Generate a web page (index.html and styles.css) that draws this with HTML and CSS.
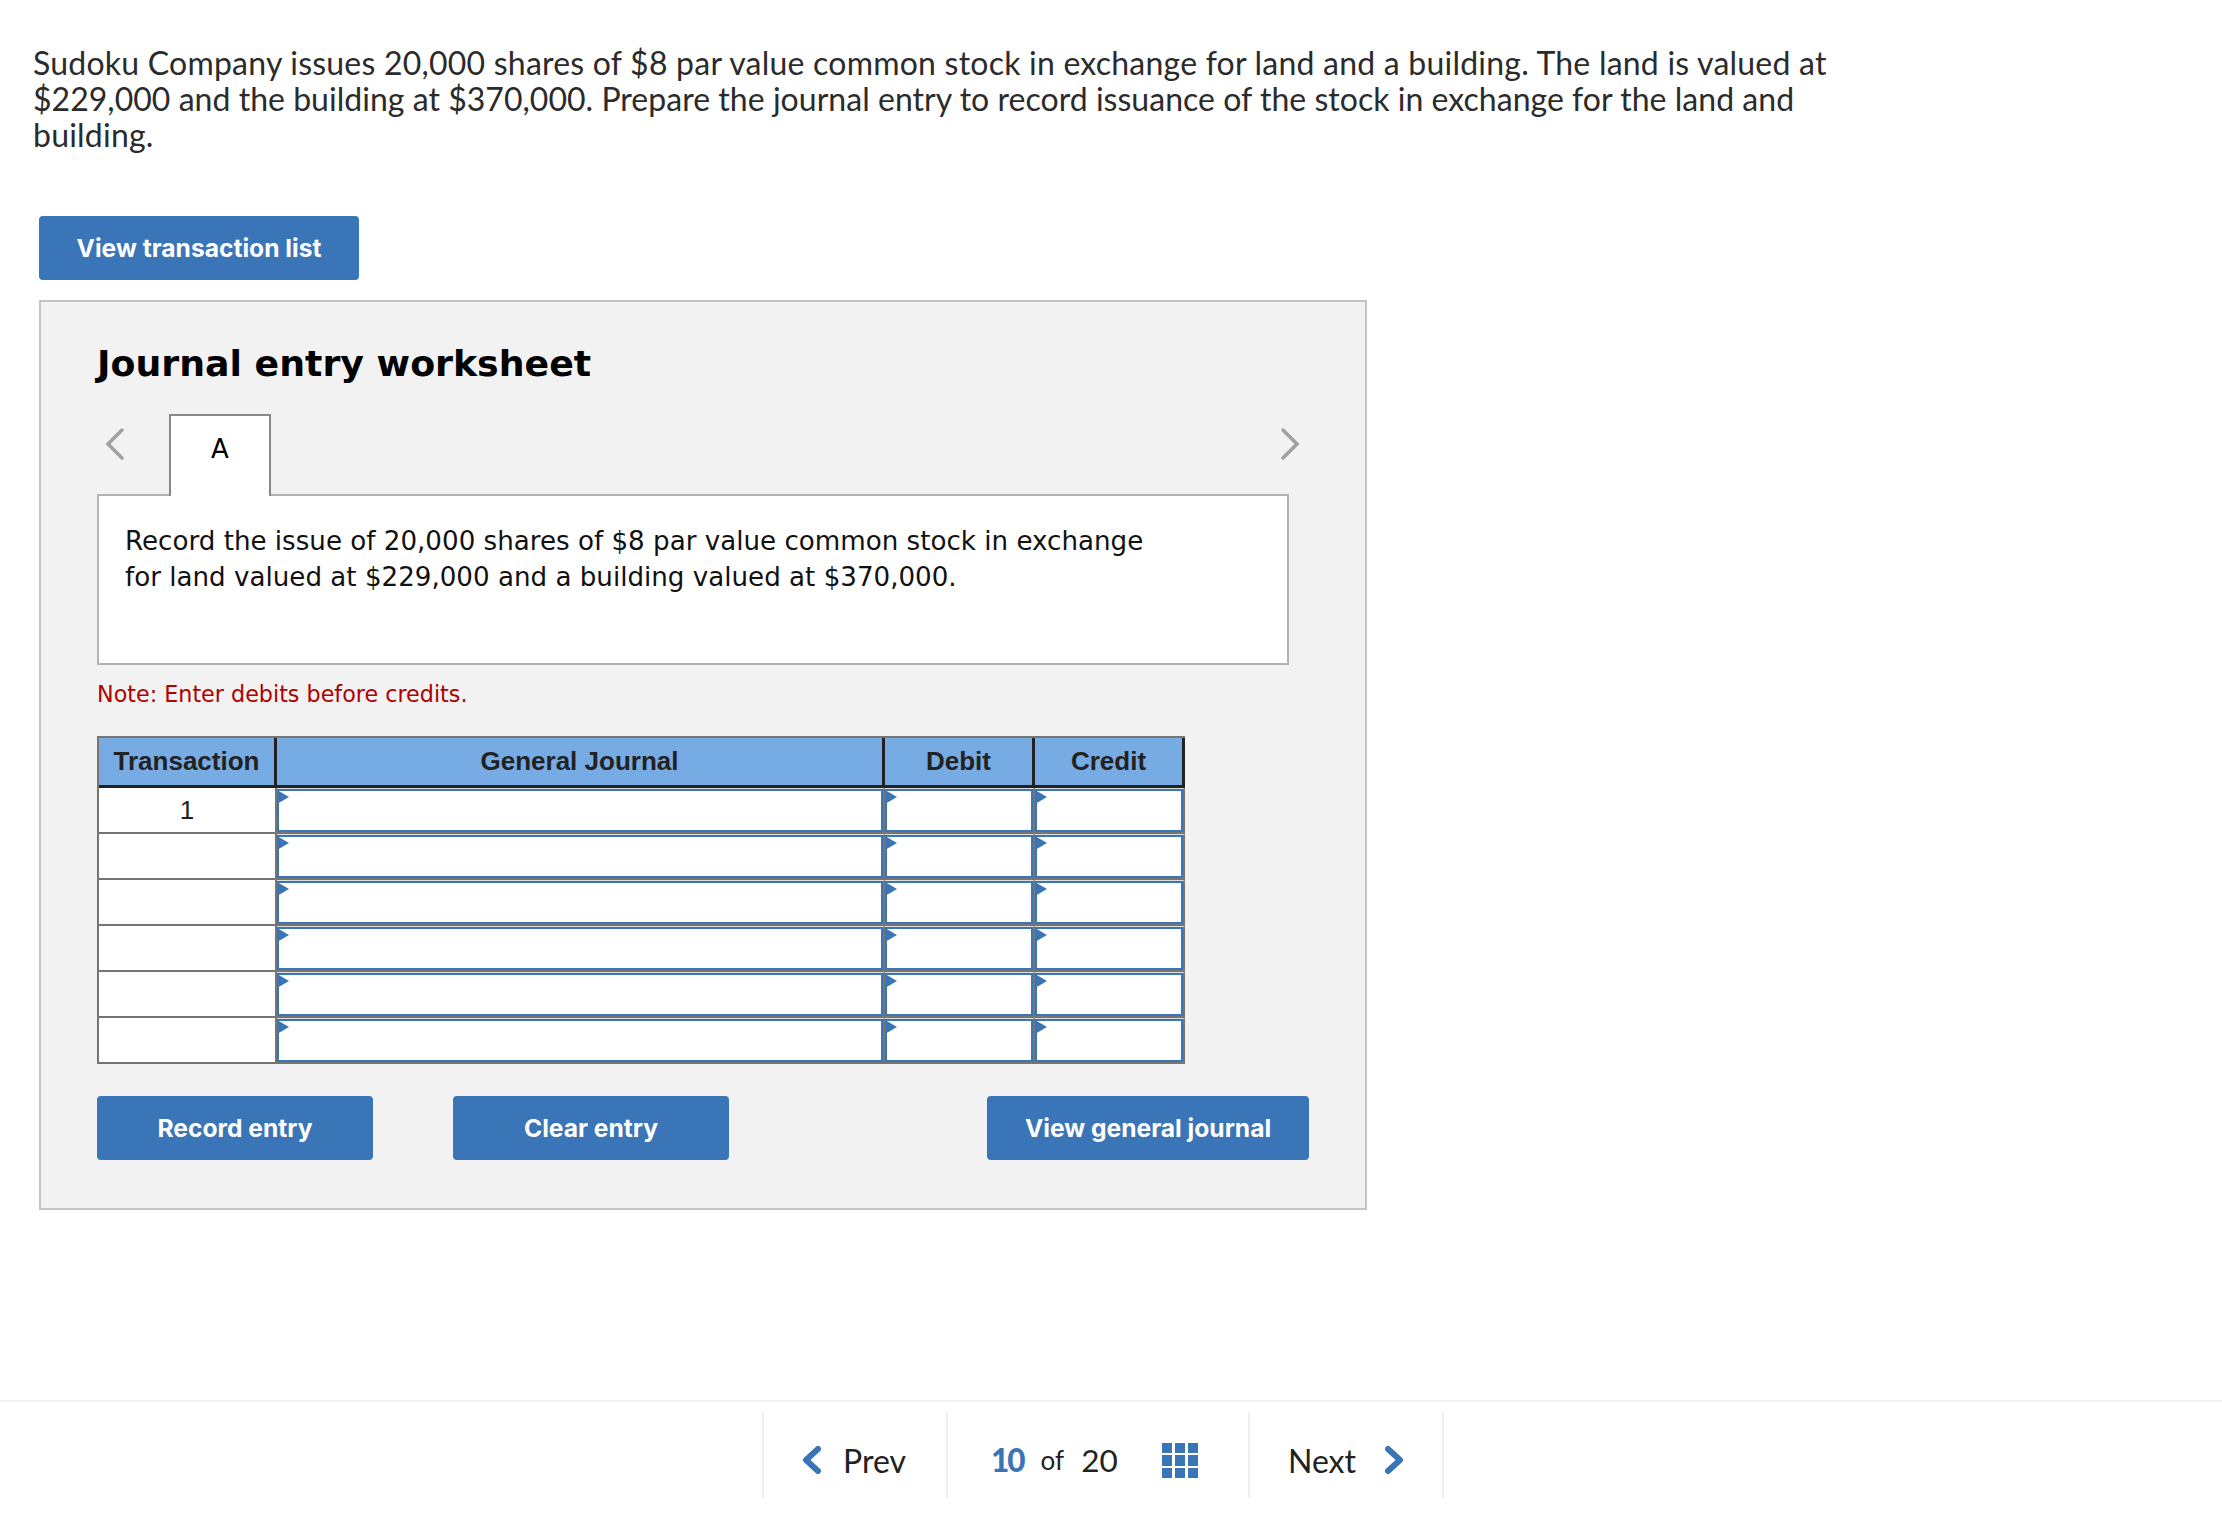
FILE: index.html
```html
<!DOCTYPE html>
<html lang="en">
<head>
<meta charset="utf-8">
<title>Journal entry worksheet</title>
<link rel="stylesheet" href="styles.css">
</head>
<body>
<main class="content">
  <p class="question">Sudoku Company issues 20,000 shares of $8 par value common stock in exchange for land and a building. The land is valued at <span class="tight">$229,000 and the building at $370,000. Prepare the journal entry to record issuance of the stock in exchange for the land and</span> building.</p>
  <button class="btn btn-list">View transaction list</button>
  <section class="panel">
    <h2 class="panel-title">Journal entry worksheet</h2>
    <div class="tabs">
      <svg class="chev" width="24" height="34" viewBox="0 0 24 34"><path d="M19 3 L5 17 L19 31" fill="none" stroke="#a0a0a0" stroke-width="3.5" stroke-linecap="round"/></svg>
      <div class="tab">A</div>
      <svg class="chev chev-right" width="24" height="34" viewBox="0 0 24 34"><path d="M5 3 L19 17 L5 31" fill="none" stroke="#a0a0a0" stroke-width="3.5" stroke-linecap="round"/></svg>
    </div>
    <div class="desc">Record the issue of 20,000 shares of $8 par value common stock in exchange<br>for land valued at $229,000 and a building valued at $370,000.</div>
    <p class="note">Note: Enter debits before credits.</p>
    <table class="journal">
      <thead>
        <tr><th class="c-t">Transaction</th><th class="c-g">General Journal</th><th class="c-d">Debit</th><th class="c-d">Credit</th></tr>
      </thead>
      <tbody>
        <tr><td class="num">1</td><td class="inp"><i></i></td><td class="inp"><i></i></td><td class="inp"><i></i></td></tr>
        <tr><td class="num"></td><td class="inp"><i></i></td><td class="inp"><i></i></td><td class="inp"><i></i></td></tr>
        <tr><td class="num"></td><td class="inp"><i></i></td><td class="inp"><i></i></td><td class="inp"><i></i></td></tr>
        <tr><td class="num"></td><td class="inp"><i></i></td><td class="inp"><i></i></td><td class="inp"><i></i></td></tr>
        <tr><td class="num"></td><td class="inp"><i></i></td><td class="inp"><i></i></td><td class="inp"><i></i></td></tr>
        <tr><td class="num"></td><td class="inp"><i></i></td><td class="inp"><i></i></td><td class="inp"><i></i></td></tr>
      </tbody>
    </table>
    <div class="actions">
      <button class="btn btn-entry">Record entry</button>
      <button class="btn btn-entry">Clear entry</button>
      <button class="btn btn-view">View general journal</button>
    </div>
  </section>
</main>
<footer class="footer">
  <nav class="pager">
    <div class="pg pg-prev">
      <svg width="20" height="30" viewBox="0 0 20 30"><path d="M16 4 L4 15 L16 26" fill="none" stroke="#3a75b7" stroke-width="6" stroke-linecap="round" stroke-linejoin="round"/></svg>
      <span>Prev</span>
    </div>
    <div class="pg pg-mid">
      <b class="cur">10</b><span class="of">of</span><span class="tot">20</span>
      <svg class="grid" width="36" height="35" viewBox="0 0 36 35"><g fill="#3a75b7"><rect x="0" y="0" width="10" height="10"/><rect x="13" y="0" width="10" height="10"/><rect x="26" y="0" width="10" height="10"/><rect x="0" y="12" width="10" height="11"/><rect x="13" y="12" width="10" height="11"/><rect x="26" y="12" width="10" height="11"/><rect x="0" y="25" width="10" height="10"/><rect x="13" y="25" width="10" height="10"/><rect x="26" y="25" width="10" height="10"/></g></svg>
    </div>
    <div class="pg pg-next">
      <span>Next</span>
      <svg width="20" height="30" viewBox="0 0 20 30"><path d="M4 4 L16 15 L4 26" fill="none" stroke="#3a75b7" stroke-width="6" stroke-linecap="round" stroke-linejoin="round"/></svg>
    </div>
  </nav>
</footer>
</body>
</html>
```
FILE: styles.css
```css
* { box-sizing: border-box; }
html, body { margin: 0; padding: 0; background: #fff; }
body { width: 2222px; height: 1518px; display: flex; flex-direction: column; color: #222; font-family: "Lato", "Liberation Sans", sans-serif; }
.content { flex: 1; padding: 45px 0 0 33px; }
.question { margin: 0 0 63px; width: 1810px; font-size: 32px; line-height: 36px; letter-spacing: 0.22px; color: #2b2b2b; }
.tight { letter-spacing: 0.03px; }
.btn { display: block; border: 0; border-radius: 4px; background: #3a75b7; color: #fff; font-family: "Inter", "Liberation Sans", sans-serif; font-weight: 700; font-size: 24.6px; height: 64px; padding: 0; }
.btn-list { width: 320px; margin: 0 0 20px 6px; }
.panel { width: 1328px; height: 910px; margin-left: 6px; background: #f2f2f2; border: 2px solid #c4c4c4; padding: 0 0 0 56px; }
.panel-title { margin: 37px 0 0; font-family: "DejaVu Sans", sans-serif; font-weight: 700; font-size: 36.3px; line-height: 50px; color: #000; }
.tabs { display: flex; align-items: flex-start; height: 82px; margin-top: 25px; width: 1205px; }
.chev { margin: 13px 0 0 6px; }
.chev-right { margin-left: auto; }
.tab { width: 102px; height: 82px; margin-left: 42px; background: #fff; border: 2px solid #888; border-bottom: 0; text-align: center; font-family: "DejaVu Sans", sans-serif; font-size: 26px; line-height: 66px; color: #000; position: relative; z-index: 1; }
.desc { width: 1192px; height: 171px; margin-top: -2px; background: #fff; border: 2px solid #b3b3b3; padding: 27px 26px 0; font-family: "DejaVu Sans", sans-serif; font-size: 26.15px; line-height: 36px; color: #111; }
.note { margin: 15px 0 0; font-family: "DejaVu Sans", sans-serif; font-size: 22.25px; line-height: 28px; color: #b00000; }
.journal { border-collapse: separate; border-spacing: 0; table-layout: fixed; width: 1087px; margin-top: 28px; border-top: 2px solid #757575; border-left: 2px solid #757575; }
.journal th { height: 50px; background: #76abe3; border-right: 3px solid #222; border-bottom: 3px solid #222; font-family: "Liberation Sans", sans-serif; font-weight: 700; font-size: 26px; color: #222; padding: 0; }
.c-t { width: 178px; }
.c-g { width: 608px; }
.c-d { width: 150px; }
.journal td { height: 46px; padding: 0; border-right: 2px solid #757575; border-bottom: 2px solid #757575; background: #fff; }
.num { text-align: center; font-family: "Liberation Sans", sans-serif; font-size: 26px; color: #222; }
.journal td.inp { position: relative; border-top: 1px solid #dcdcdc; box-shadow: inset 0 0 0 2px #3a75b7; }
.inp i { position: absolute; left: 0; top: 1px; width: 0; height: 0; border-left: 12px solid #3a75b7; border-top: 7px solid transparent; border-bottom: 7px solid transparent; }
.actions { display: flex; margin-top: 32px; width: 1212px; }
.btn-entry { width: 276px; margin-right: 80px; }
.btn-view { width: 322px; margin-left: auto; }
.footer { height: 118px; border-top: 2px solid #f2f2f2; padding-top: 10px; display: flex; justify-content: center; }
.pager { display: flex; height: 86px; margin-right: 16px; }
.pg { display: flex; align-items: center; border-left: 2px solid #f0f0f0; font-size: 32px; color: #222; padding-top: 10px; }
.pg-prev { width: 184px; padding-left: 38px; gap: 21px; }
.pg-mid { width: 302px; padding-left: 43px; font-size: 31.5px; }
.pg-next { width: 196px; padding-left: 38px; gap: 28px; border-right: 2px solid #f0f0f0; }
.cur { color: #3a75b7; font-weight: 900; letter-spacing: -2px; }
.of { font-size: 26px; margin-left: 17px; }
.tot { margin-left: 17px; }
.grid { margin-left: 44px; }
```
